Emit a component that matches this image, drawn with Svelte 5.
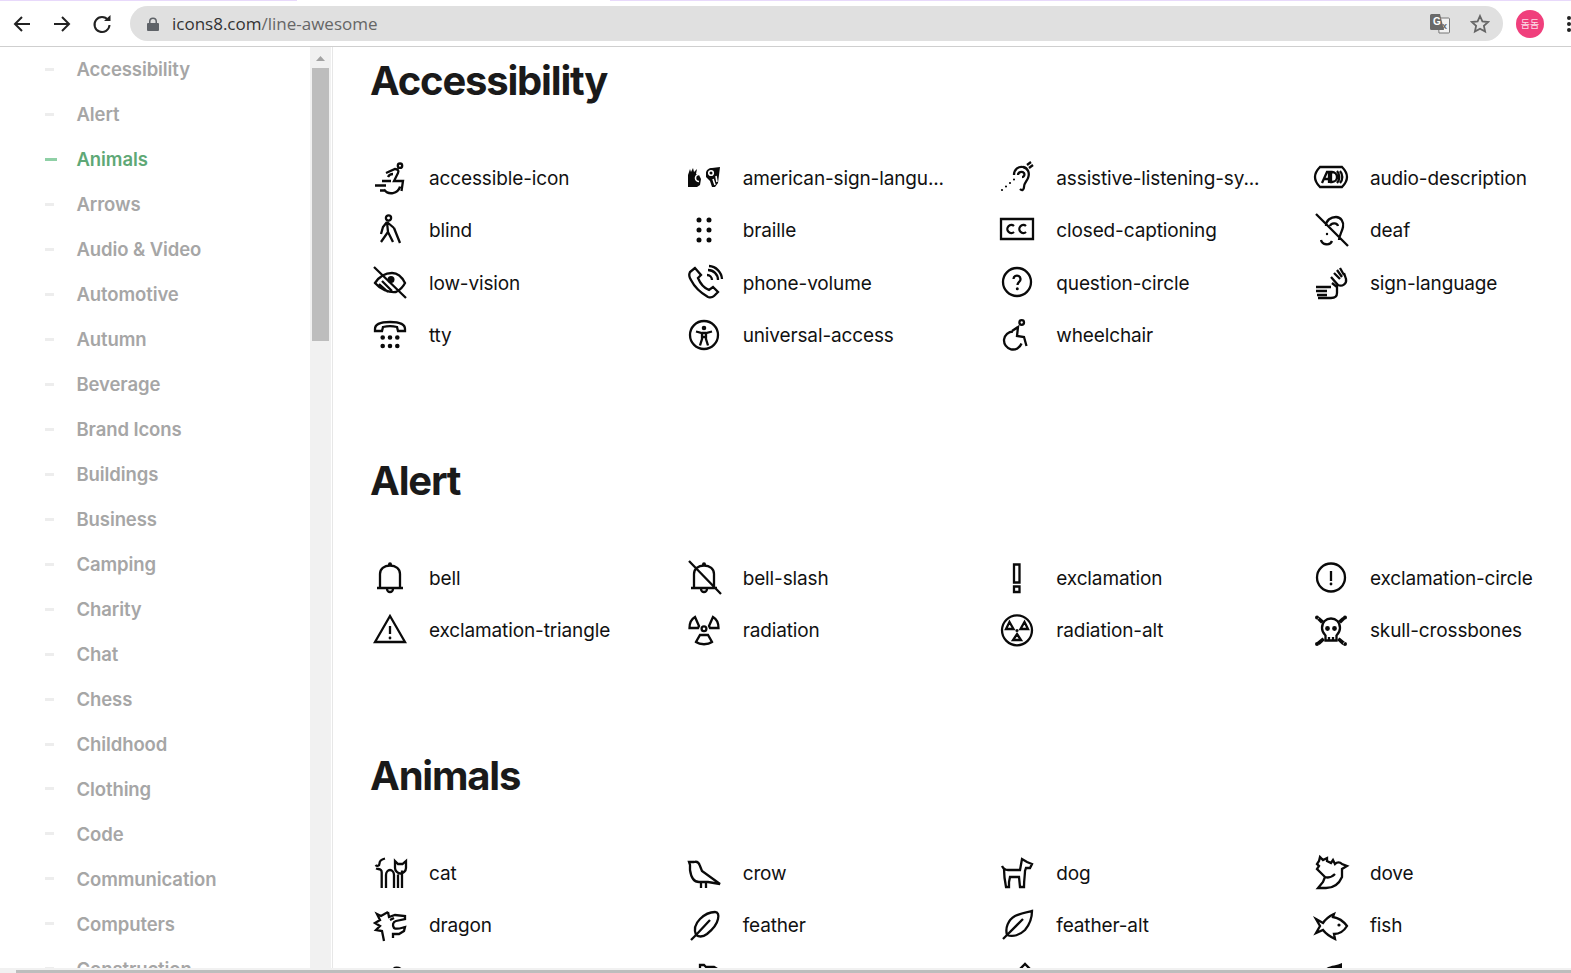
<script>
  // circle as a path, so every icon stays two strings
  const c = (x, y, r) => `M${x - r} ${y}a${r} ${r} 0 1 0 ${r * 2} 0a${r} ${r} 0 1 0 ${-r * 2} 0`;

  const categories = [
    'Accessibility', 'Alert', 'Animals', 'Arrows', 'Audio & Video', 'Automotive', 'Autumn',
    'Beverage', 'Brand Icons', 'Buildings', 'Business', 'Camping', 'Charity', 'Chat', 'Chess',
    'Childhood', 'Clothing', 'Code', 'Communication', 'Computers', 'Construction'
  ];

  const bell = 'M6 25V12C6 7 10 3.500 16 3.500S26 7 26 12V25M3 26H29M13 27a3 3 0 0 0 6 0';

  const sections = [
    {
      title: 'Accessibility',
      icons: [
        { name: 'accessible-icon', s: c(26, 3.7, 2.2) + 'M12 11l9-4c3 0 4 2 3 4l-4 8h9l-1.500 10M8 19h9M1 23.500h11M6 28.500h5M10 27.500a9 9 0 0 0 16-3M14 15c1-2 3-3 5-3' },
        { name: 'american-sign-langu...', f: 'M0 25V13l2-6 1 3 2-4 1 4 3-3-1 5 3 1 2 4-1 6-3 2zM18 11c0-3 3-5 6-5l8-1-1 8-1 8-3 4h-3l-2-6-4-4z', w: 'M11 12.500a3.500 3.500 0 1 0 0 7M25 17l2 6M28 14l1 6' + c(23, 11, 2.3) },
        { name: 'assistive-listening-sy...', s: 'M13 13C13 7 18 4 22 5 27 6 29 11 27 16 26 19 23 21 23 25 23 28 21 29 19 27M17 13c0-3 4-4 6-2 1 2 0 4-2 4M26 3l4-3M28 6l4-3', f: c(1, 28, 1.1) + c(5, 24.5, 1.1) + c(9, 21, 1.1) + c(13, 17.5, 1.1) },
        { name: 'audio-description', s: 'M5 5H27C30 8 32 11 32 15S30 22 27 25H5C2 22 0 19 0 15S2 8 5 5ZM7 21L12 10H14V21M9 17H14M16 10h1a5 5 0 0 1 0 10h-1zM22 9a9 9 0 0 1 0 12M25 9a9 9 0 0 1 0 12' },
        { name: 'blind', s: c(14.5, 3, 2.6) + 'M13 7L9 12 7 19M13 7l7 6M13 7l1 10-7 10M14 17l5 10M20 13l6 15' },
        { name: 'braille', f: c(11, 5, 2.5) + c(21, 5, 2.5) + c(11, 15, 2.5) + c(21, 15, 2.5) + c(11, 25, 2.5) + c(21, 25, 2.5) },
        { name: 'closed-captioning', s: 'M0 4H32V24H0ZM13 11a4 4 0 1 0 0 6M25 11a4 4 0 1 0 0 6' },
        { name: 'deaf', s: 'M11 11C11 5 16 2 21 2S29 7 28 12C27 17 24 21 24 25M15 11c1-3 7-4 8 0M6 25c1 5 9 6 11 1M1-1L33 31', f: c(12, 19, 1.2) },
        { name: 'low-vision', s: 'M0 0L32 31M1 16C5 10 11 6 18 6 23 6 28 10 31 16 29 20 26 23 22 25 15 26 6 22 1 16ZM5 17l9 8M8 14l10 10', f: c(17, 12.5, 3.5) },
        { name: 'phone-volume', s: 'M7 1L2 5C1 7 1 10 3 13 7 21 13 26 20 30 23 31 25 30 26 29L30 25 25 20 21 23C16 21 12 16 10 11L13 8ZM19 8a5 5 0 0 1 5 5M20 3a10 10 0 0 1 10 10M21-1a14 14 0 0 1 13 13' },
        { name: 'question-circle', s: c(16, 15, 14) + 'M12.500 12a3.500 3.500 0 1 1 5.500 3c-1 1-1.500 1.500-1.500 3', f: c(16.3, 21.8, 1.5) },
        { name: 'sign-language', s: 'M16 10l7 8c4 2 9-1 8-6l-2-6M19 6l6 6M22 3l5 7M25 1l4 7M1 20h15M1 24h11M2 28h10M3 31h13c4 0 6-2 6-5v-6l-5-4' },
        { name: 'tty', s: 'M1 9C1 4 8 2 16 2S31 4 31 9v2h-7l-1-4c-4-1-10-1-14 0l-1 4H1Z', f: c(8.7, 17.5, 2.3) + c(16, 17.5, 2.3) + c(23.3, 17.5, 2.3) + c(8.7, 26, 2.3) + c(16, 26, 2.3) + c(23.3, 26, 2.3) },
        { name: 'universal-access', s: c(16, 15, 14) + 'M8 11.500l6 1.500h4l6-1.500M14 13v6l-2 6.500M18 13v6l2 6.500M14 17h4', f: c(16, 8, 2.3) },
        { name: 'wheelchair', s: c(20.7, 2.5, 2.3) + 'M12 11.500a9 9 0 1 0 8.500 12M11 11l6-4-1 9 7 1 2.500 9' }
      ]
    },
    {
      title: 'Alert',
      icons: [
        { name: 'bell', s: bell, f: c(16, 2.2, 2) },
        { name: 'bell-slash', s: bell + 'M1-1L33 32', f: c(16, 2.2, 2) },
        { name: 'exclamation', s: 'M13 2.500h5.500v18H13ZM13 24.500h5.500V30H13Z' },
        { name: 'exclamation-circle', s: c(16, 15.5, 14) + 'M16 9v10', f: c(16, 22, 1.4) },
        { name: 'exclamation-triangle', s: 'M16 1L31 27H1ZM16 11v8', f: c(16, 23, 1.4) },
        { name: 'radiation', s: 'M1.500 13H10l1-2L7 2C3.500 4 1.500 8 1.500 13ZM30.500 13H22l-1-2 4-9C28.500 4 30.500 8 30.500 13ZM12 20h8l4 7c-4 3-12 3-16 0Z' + c(16, 13.7, 2.4) },
        { name: 'radiation-alt', s: c(16, 15.3, 15) + 'M8.500 7l4 7H5ZM23.500 7l3.500 7H19.500ZM16 19l4 6H12Z', f: c(16, 15.5, 1.6) },
        { name: 'skull-crossbones', s: 'M7 13C7 7 11 3.500 16 3.500S25 7 25 13C25 17 23 19 21.500 20.500V25.500H10.500V20.500C9 19 7 17 7 13ZM14 22v3.500M18 22v3.500', f: c(12.5, 13.5, 2.4) + c(19.5, 13.5, 2.4) + c(2, 2.5, 2) + c(30, 2.5, 2) + c(2, 29, 2) + c(30, 29, 2) + 'M2 4.500L4.500 2 9 6 6 8.500zM30 4.500L27.500 2 23 6 26 8.500zM2 27L4.500 30 10 25 7.500 22.500zM30 27L27.500 30 22 25 24.500 22.500z' }
      ]
    },
    {
      title: 'Animals',
      icons: [
        { name: 'cat', s: 'M11 1.500C7 2.500 5.500 4 5.500 6.500 5.500 9 3 9.500 1.500 8M2 11.500c3 1 5.700 0 5.700 4V31M12 31V18c0-3 2-5 4-5s4 2 4 5V31M24 31V17.500M28 31V13.500M21 4l3 3h4.500L32 4v7c0 3-3 5.500-5.500 5.500S21 14 21 11Z' },
        { name: 'crow', s: 'M1 5H6C9 4 11 6 12 9L14 14 32 27 20 25H11C6 25 3 20 2 13V8ZM13 25v6M18 25v6' },
        { name: 'dog', s: 'M1 9C2 11 4 13 7 13H19L21 2 26 5 31 7 29 11H25L24 14C24 18 23 22 23 30H19L18 20H9L8 25V30H5C4 25 3 18 3 12' },
        { name: 'dove', s: 'M5 0L4 4 2 7 4 9 2 12 6 16 10 20 8 25 3 31H11C18 31 24 27 27 20V12L32 9 27 7C25 5 22 5 20 7L18 3 16 6 12 4 12 1 8 3ZM10 20c3 1 7 0 10-3' },
        { name: 'dragon', s: 'M14 2L15 7 21 5 31 6V9L22 11C19 12 18 15 20 18 23 20 27 18 31 17L30 21 25 24H19V28M14 2L7 6 3 4 6 10 1 13 6 16 2 20 8 21 10 31M16 10l4-2' },
        { name: 'feather', s: 'M3 30L8 25C6 20 7 14 12 9 17 4 23 2 27 2 30 2 31 5 30 9 29 14 24 20 19 24 15 27 11 27 8 25M8 25L22 10' },
        { name: 'feather-alt', s: 'M2 29L6 25C4 18 7 10 14 6 20 3 26 2 31 1 31 8 29 14 24 20 19 25 12 27 6 25M6 25L22 9' },
        { name: 'fish', s: 'M1 9L8 13C12 7 17 5 19 4L18 7C24 8 29 12 32 16 29 21 24 24 19 24L20 29C16 27 11 24 8 20L1 23 5 16Z', f: c(24, 15, 1.6) },
        { name: '', s: 'M19 8c1-3 6-3 9 0' },
        { name: '', s: 'M12 8V3h4l2 2h8l5 3' },
        { name: '', s: 'M18 8l6-6 6 6' },
        { name: '', f: 'M9 8C14 3 21 4 27 1V8Z' }
      ]
    }
  ];
</script>

<div class="page">
  <header class="browser">
    <div class="tab-strip"></div>
    <div class="toolbar">
      <svg class="nav" viewBox="0 0 40 24"><path d="M28 12H13M20 5l-7 7 7 7" /></svg>
      <svg class="nav" viewBox="0 0 40 24"><path d="M12 12h15M20 5l7 7-7 7" /></svg>
      <svg class="nav" viewBox="0 0 40 24"><path d="M26 8a7.500 7.500 0 1 0 1.500 5" /><path class="solid" d="M22 9h6.500V3z" /></svg>
      <div class="omnibox">
        <svg class="lock" viewBox="0 0 12 14"><path d="M2 6V4.500a4 4 0 0 1 8 0V6h1a1 1 0 0 1 1 1v6a1 1 0 0 1-1 1H1a1 1 0 0 1-1-1V7a1 1 0 0 1 1-1zM3.500 6h5V4.500a2.500 2.500 0 0 0-5 0z" /></svg>
        <span class="url">icons8.com<span class="url-path">/line-awesome</span></span>
        <svg class="translate" viewBox="0 0 20 20">
          <path d="M8 4h10.500a1 1 0 0 1 1 1v13a1 1 0 0 1-1 1H9z" fill="#f2f2f2" stroke="#777" />
          <path d="M1.500 0H10l4 16H1.500A1.500 1.500 0 0 1 0 14.500V1.500A1.500 1.500 0 0 1 1.500 0z" fill="#696969" />
          <text x="3" y="11" class="translate-g">G</text>
          <text x="12" y="15" class="translate-x">x</text>
        </svg>
        <svg class="star" viewBox="0 0 20 20"><path d="M10 2l2.400 5.400 5.800.6-4.300 3.900 1.200 5.700L10 14.700l-5.100 2.900 1.200-5.700L1.800 8l5.800-.6z" /></svg>
      </div>
      <div class="avatar">돔돔</div>
      <div class="menu"><i></i><i></i><i></i></div>
    </div>
  </header>

  <div class="content">
    <nav class="sidebar">
      {#each categories as name}
        <div class="cat" class:active={name === 'Animals'}>
          <span class="dash"></span>
          <span>{name}</span>
        </div>
      {/each}
    </nav>

    <div class="vscroll">
      <svg class="up" viewBox="0 0 9 5"><path d="M4.500 0L9 5H0z" /></svg>
      <div class="vthumb"></div>
    </div>

    <main class="main">
      {#each sections as section}
        <section class="section">
          <h2>{section.title}</h2>
          <div class="grid">
            {#each section.icons as icon}
              <div class="item">
                <svg class="icon" viewBox="0 0 32 32">
                  {#if icon.f}<path class="fill" d={icon.f} />{/if}
                  {#if icon.s}<path class="line" d={icon.s} />{/if}
                  {#if icon.w}<path class="knock" d={icon.w} />{/if}
                </svg>
                {#if icon.name}<span>{icon.name}</span>{/if}
              </div>
            {/each}
          </div>
        </section>
      {/each}
    </main>
  </div>

  <div class="hscroll"><div class="hthumb"></div></div>
</div>

<style>
  :global(body) {
    background: #fff;
    overflow: hidden;
  }

  .page {
    height: 973px;
    display: flex;
    flex-direction: column;
    overflow: hidden;
    font-family: Inter, "Noto Sans", sans-serif;
    background: #fff;
  }

  .browser {
    flex: none;
    border-bottom: 1px solid #cfcfcf;
  }
  .tab-strip {
    height: 1px;
    background: linear-gradient(to right, #e8d9fb 297px, #fff 297px, #fff 610px, #e8d9fb 610px);
  }
  .toolbar {
    height: 45px;
    display: flex;
    align-items: center;
    padding-left: 2px;
  }
  .nav {
    flex: none;
    width: 40px;
    height: 24px;
    fill: none;
    stroke: #222;
    stroke-width: 2;
  }
  .nav .solid {
    fill: #222;
    stroke: none;
  }
  .omnibox {
    flex: none;
    width: 1373px;
    height: 35px;
    margin-left: 8px;
    border-radius: 18px;
    background: #e0e0e0;
    display: flex;
    align-items: center;
    padding-left: 17px;
    box-sizing: border-box;
  }
  .lock {
    width: 12px;
    height: 14px;
    fill: #5f6368;
  }
  .url {
    margin-left: 13px;
    font-family: "Open Sans", sans-serif;
    font-size: 17px;
    color: #333;
    flex: 1;
  }
  .url-path {
    color: #666;
  }
  .translate {
    width: 20px;
    height: 20px;
    overflow: visible;
  }
  .translate-g {
    font: 700 10px "Liberation Sans", sans-serif;
    fill: #fff;
  }
  .translate-x {
    font: 700 9px "Liberation Sans", sans-serif;
    fill: #666;
  }
  .star {
    width: 20px;
    height: 20px;
    margin: 0 13px 0 20px;
    fill: none;
    stroke: #666;
    stroke-width: 1.8;
  }
  .avatar {
    flex: none;
    width: 28px;
    height: 28px;
    margin-left: 13px;
    border-radius: 50%;
    background: #f03f7c;
    color: #fbdbe6;
    font: 10px/28px "Noto Sans CJK KR", sans-serif;
    text-align: center;
  }
  .menu {
    flex: none;
    margin-left: 23px;
    display: flex;
    flex-direction: column;
    gap: 2px;
  }
  .menu i {
    width: 4px;
    height: 4px;
    border-radius: 50%;
    background: #222;
  }

  .content {
    flex: 1;
    min-height: 0;
    display: flex;
    overflow: hidden;
  }

  .sidebar {
    flex: none;
    width: 310px;
    overflow: hidden;
  }
  .cat {
    height: 44.97px;
    display: flex;
    align-items: center;
    padding-left: 45px;
    font-size: 18.5px;
    font-weight: 600;
    letter-spacing: -0.1px;
    color: #a6a6a6;
    white-space: nowrap;
  }
  .dash {
    flex: none;
    width: 9px;
    height: 3px;
    margin-right: 22.500px;
    background: #ededed;
  }
  .cat.active {
    color: #5ea876;
  }
  .cat.active .dash {
    width: 12px;
    margin-right: 19.500px;
    background: #8fd0a6;
  }

  .vscroll {
    flex: none;
    width: 21px;
    background: #f1f1f1;
    padding: 0 2px;
    box-sizing: border-box;
  }
  .up {
    display: block;
    width: 9px;
    height: 5px;
    margin: 9px auto 7px;
    fill: #a3a3a3;
  }
  .vthumb {
    height: 273px;
    background: #bdbdbd;
  }

  .main {
    flex: 1;
    min-width: 0;
    margin-left: 1px;
    padding: 10px 0 0 37px;
    border-left: 1px solid #e7e7e7;
    overflow: hidden;
  }
  .section + .section {
    margin-top: 95.100px;
  }
  h2 {
    margin: 0 0 47.200px;
    font-size: 40px;
    line-height: 48px;
    font-weight: 700;
    letter-spacing: -1.2px;
    color: #1a1a1a;
  }
  .grid {
    display: grid;
    grid-template-columns: repeat(4, 313.67px);
    grid-auto-rows: 52.4px;
    width: 1255px;
    margin-left: 4px;
  }
  .item {
    display: flex;
    align-items: center;
    gap: 23px;
    font-size: 19px;
    letter-spacing: -0.13px;
    color: #111;
    white-space: nowrap;
  }
  .icon {
    flex: none;
    width: 32px;
    height: 32px;
    overflow: visible;
  }
  .line {
    fill: none;
    stroke: #0a0a0a;
    stroke-width: 2.3;
  }
  .fill {
    fill: #0a0a0a;
  }
  .knock {
    fill: none;
    stroke: #fff;
    stroke-width: 1.6;
  }

  .hscroll {
    flex: none;
    height: 5px;
    padding: 2px 0 0 16px;
    box-sizing: border-box;
    background: #f1f1f1;
  }
  .hthumb {
    height: 3px;
    background: #bdbdbd;
  }
</style>
